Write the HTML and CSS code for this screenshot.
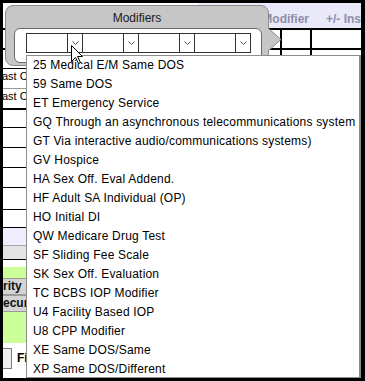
FILE: index.html
```html
<!DOCTYPE html>
<html>
<head>
<meta charset="utf-8">
<title>Modifiers</title>
<link rel="stylesheet" href="styles.css">
</head>
<body>
<div class="frame">
  <div class="screen">
    <div class="table">
      <div class="row hdr">
        <div class="hdr-blank"></div>
        <div class="hdr-cols"><span class="hdr-mod">Modifier</span><span class="hdr-ins">+/- Ins</span></div>
      </div>
      <div class="row r-a"><div class="cell c-main"></div><div class="cell c-mod"></div><div class="cell c-ins"></div></div>
      <div class="row r-b"><div class="cell c-main"></div><div class="cell c-mod"></div><div class="cell c-ins"></div></div>
      <div class="row r-c"><span class="lbl">ast C</span></div>
      <div class="row r-d"><span class="lbl">ast C</span></div>
      <div class="row r-e"></div>
      <div class="row r-f"></div>
      <div class="row r-f"></div>
      <div class="row r-f"></div>
      <div class="row r-g"></div>
      <div class="row r-e"></div>
      <div class="row r-lav"></div>
      <div class="row r-gry"></div>
      <div class="row r-wht"></div>
      <div class="row r-green">
        <div class="gbtn">rity</div>
        <div class="gbtn">ecur</div>
      </div>
      <div class="row r-bot">
        <div class="chk"></div>
        <span class="fi">Fi</span>
      </div>
    </div>

    <div class="popup">
      <div class="popup-title">Modifiers</div>
      <div class="popup-box">
        <div class="sel-row">
          <div class="sel"><div class="sel-text"></div><div class="sel-btn"><svg class="chev" width="7" height="4" viewBox="0 0 7 4"><polyline points="0.5,0.5 3.5,3.5 6.5,0.5" fill="none" stroke="#555" stroke-width="1"/></svg></div></div>
          <div class="sel"><div class="sel-text"></div><div class="sel-btn"><svg class="chev" width="7" height="4" viewBox="0 0 7 4"><polyline points="0.5,0.5 3.5,3.5 6.5,0.5" fill="none" stroke="#555" stroke-width="1"/></svg></div></div>
          <div class="sel"><div class="sel-text"></div><div class="sel-btn"><svg class="chev" width="7" height="4" viewBox="0 0 7 4"><polyline points="0.5,0.5 3.5,3.5 6.5,0.5" fill="none" stroke="#555" stroke-width="1"/></svg></div></div>
          <div class="sel"><div class="sel-text"></div><div class="sel-btn"><svg class="chev" width="7" height="4" viewBox="0 0 7 4"><polyline points="0.5,0.5 3.5,3.5 6.5,0.5" fill="none" stroke="#555" stroke-width="1"/></svg></div></div>
        </div>
      </div>
      <svg class="pointer" width="14" height="24" viewBox="0 0 14 24">
        <polygon points="0,0 13,11.5 0,23" fill="#c6c6c6"/>
        <polyline points="0,0 13,11.5 0,23" fill="none" stroke="#8c8c8c" stroke-width="1"/>
      </svg>
    </div>

    <ul class="list">
      <li>25 Medical E/M Same DOS</li>
      <li>59 Same DOS</li>
      <li>ET Emergency Service</li>
      <li>GQ Through an asynchronous telecommunications system</li>
      <li>GT Via interactive audio/communications systems)</li>
      <li>GV Hospice</li>
      <li>HA Sex Off. Eval Addend.</li>
      <li>HF Adult SA Individual (OP)</li>
      <li>HO Initial DI</li>
      <li>QW Medicare Drug Test</li>
      <li>SF Sliding Fee Scale</li>
      <li>SK Sex Off. Evaluation</li>
      <li>TC BCBS IOP Modifier</li>
      <li>U4 Facility Based IOP</li>
      <li>U8 CPP Modifier</li>
      <li>XE Same DOS/Same</li>
      <li>XP Same DOS/Different</li>
    </ul>

    <svg class="cursor" width="13" height="20" viewBox="0 0 13 20">
      <path d="M0.5,0.5 L0.5,16.5 L4.5,12.5 L7.5,18.5 L9.5,17.5 L6.5,11.5 L11.5,11.5 Z" fill="#fff" stroke="#000" stroke-width="1" stroke-linejoin="miter"/>
    </svg>
  </div>
</div>
</body>
</html>
```

FILE: styles.css
```css
html, body {
  margin: 0;
  padding: 0;
  background: #000;
}

.frame {
  width: 365px;
  height: 381px;
  box-sizing: border-box;
  padding: 3px 4px 3px 3px;
  background: #000;
}

.screen {
  position: relative;
  width: 358px;
  height: 375px;
  overflow: hidden;
  background: #fff;
  font-family: "Liberation Sans", Arial, sans-serif;
}

.table {
  display: flex;
  flex-direction: column;
}

.row {
  box-sizing: border-box;
  display: flex;
  flex-shrink: 0;
}

.hdr {
  height: 25px;
}

.hdr-blank {
  width: 197px;
  background: #fff;
}

.hdr-cols {
  flex: 1;
  background: #e9e9f9;
  display: flex;
  align-items: flex-start;
  padding-top: 9px;
  padding-left: 63px;
  font-size: 12px;
  font-weight: bold;
  line-height: 14px;
  color: #8e8ea8;
  white-space: nowrap;
}

.hdr-ins {
  margin-left: 17px;
}

.r-a {
  height: 22px;
  border-top: 2px solid #000;
  border-bottom: 2px solid #000;
}

.r-b {
  height: 19px;
  border-bottom: 1px solid #000;
}

.cell {
  box-sizing: border-box;
}

.c-main {
  width: 277px;
}

.c-mod {
  width: 30px;
  border-left: 2px solid #000;
}

.c-ins {
  flex: 1;
  border-left: 2px solid #000;
}

.r-c {
  height: 20px;
  border-bottom: 1px solid #999;
}

.r-d {
  height: 21px;
  border-bottom: 2px solid #000;
}

.lbl {
  font-size: 11px;
  line-height: 15px;
  margin-left: -1px;
  color: #000;
  white-space: nowrap;
}

.r-e {
  height: 18px;
  border-bottom: 1px solid #000;
}

.r-f {
  height: 20px;
  border-bottom: 1px solid #000;
}

.r-g {
  height: 22px;
  border-bottom: 1px solid #000;
}

.r-lav {
  height: 18px;
  background: #eeeeff;
  border-bottom: 1px solid #a8a8a8;
}

.r-gry {
  height: 14px;
  background: #e4e4e4;
  border-bottom: 1px solid #000;
}

.r-wht {
  height: 7px;
}

.r-green {
  height: 76px;
  background: #ccff99;
  flex-direction: column;
  padding-top: 11px;
}

.gbtn {
  box-sizing: border-box;
  width: 44px;
  height: 17px;
  margin-left: -4px;
  padding-left: 3px;
  background: #d4d4d4;
  border: 1px solid #9a9a9a;
  font-size: 12px;
  font-weight: bold;
  line-height: 15px;
  color: #111;
  white-space: nowrap;
}

.r-bot {
  height: 35px;
  background: #fff;
  align-items: flex-start;
  padding-top: 5px;
}

.chk {
  box-sizing: border-box;
  width: 12px;
  height: 21px;
  margin-left: -3px;
  background: #efefef;
  border: 1px solid #7a7a7a;
}

.fi {
  margin-left: 5px;
  margin-top: 3px;
  font-size: 12px;
  font-weight: bold;
  line-height: 14px;
  color: #000;
}

/* popup */
.popup {
  position: absolute;
  left: 2px;
  top: 2px;
  width: 264px;
  height: 61px;
  box-sizing: border-box;
  background: #c6c6c6;
  border: 1px solid #8c8c8c;
  border-radius: 8px;
}

.popup-title {
  height: 22px;
  box-sizing: border-box;
  padding-top: 2px;
  line-height: 20px;
  text-align: center;
  font-size: 12px;
  color: #1a1a1a;
}

.popup-box {
  box-sizing: border-box;
  margin-left: 8px;
  width: 248px;
  height: 35px;
  background: #fff;
  border: 1px solid #6a6a6a;
  border-radius: 6px;
  padding: 4px 0 0 11px;
}

.sel-row {
  display: flex;
  border-left: 1px solid #333;
  width: max-content;
}

.sel {
  box-sizing: border-box;
  width: 56px;
  height: 20px;
  display: flex;
  border-top: 1px solid #333;
  border-bottom: 1px solid #333;
  border-right: 1px solid #333;
}

.sel-text {
  width: 40px;
}

.sel-btn {
  flex: 1;
  border-left: 1px solid #333;
  display: flex;
  align-items: center;
  justify-content: center;
}

.chev {
  display: block;
}

.pointer {
  position: absolute;
  left: 262px;
  top: 22px;
  display: block;
}

/* dropdown list */
.list {
  position: absolute;
  left: 23px;
  top: 52px;
  width: 335px;
  height: 323px;
  box-sizing: border-box;
  margin: 0;
  padding: 0;
  list-style: none;
  background: #fff;
  border: 1px solid #8c8c8c;
  border-right-width: 2px;
  overflow: hidden;
}

.list li {
  height: 19px;
  line-height: 19px;
  padding-left: 6px;
  font-size: 12px;
  letter-spacing: 0.2px;
  color: #000;
  white-space: nowrap;
}

.cursor {
  position: absolute;
  left: 68px;
  top: 42px;
  display: block;
}
```
